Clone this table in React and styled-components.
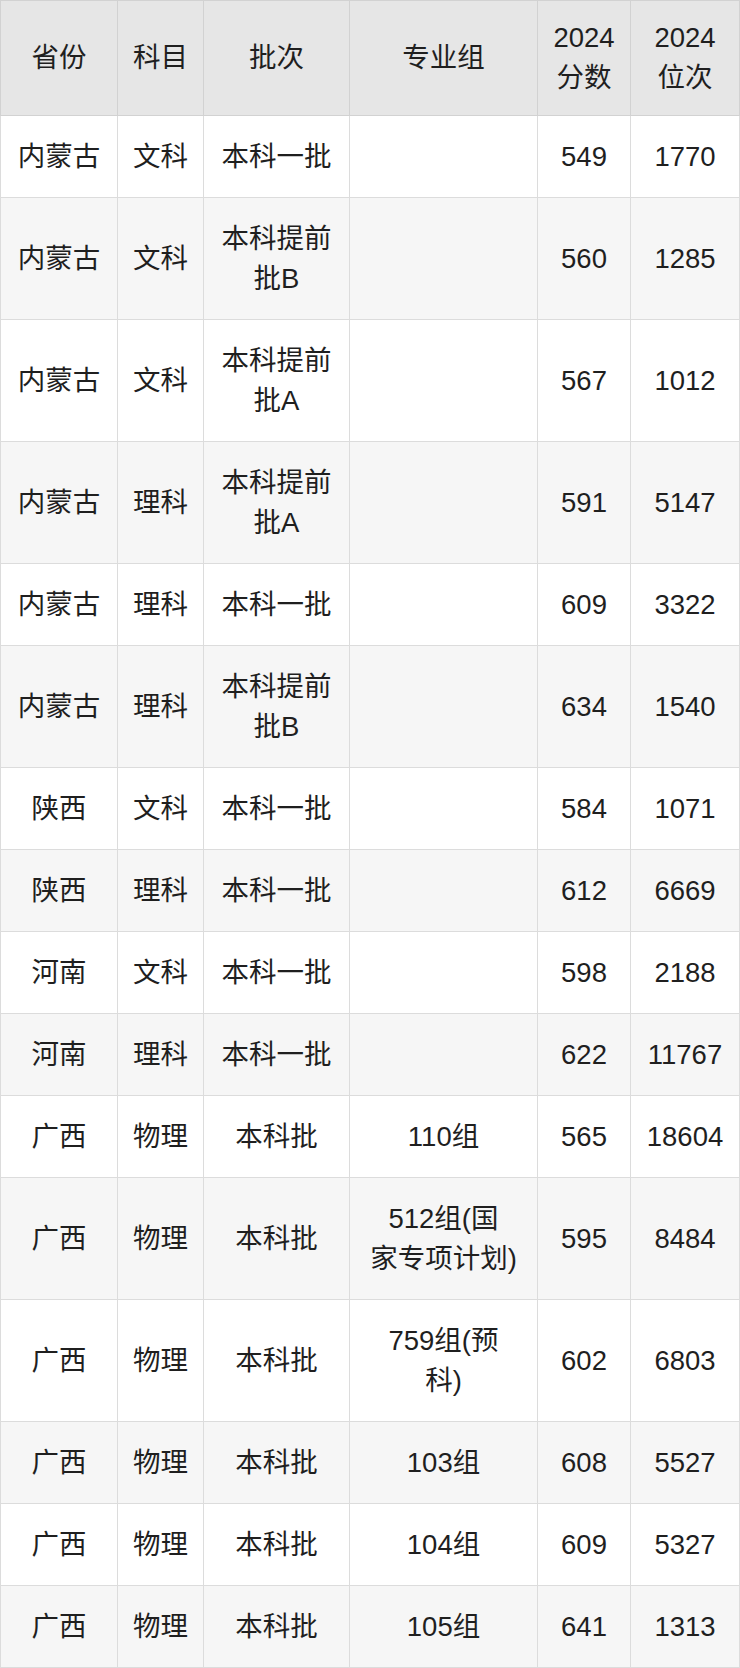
import styled, { createGlobalStyle } from 'styled-components';

const GlobalStyle = createGlobalStyle`
  html, body {
    margin: 0;
    padding: 0;
    background: #ffffff;
  }
  body {
    font-family: "Liberation Sans", "Noto Sans CJK SC", sans-serif;
    color: #1f1f1f;
  }
`;

const Table = styled.table`
  width: 739px;
  border-collapse: collapse;
  table-layout: fixed;
  font-size: 27.5px;
  line-height: 40px;
  color: #1f1f1f;
`;

const HeadCell = styled.th`
  background: #e6e6e6;
  border: 1px solid #d2d2d2;
  padding: 17px 6px;
  font-weight: 400;
  text-align: center;
  vertical-align: middle;
`;

const Row = styled.tr`
  background: ${(p) => (p.$striped ? '#f6f6f6' : '#ffffff')};
`;

const Cell = styled.td`
  border: 1px solid #dcdcdc;
  padding: 20.5px 6px;
  text-align: center;
  vertical-align: middle;
`;

const columns = [
  { key: 'prov', label: ['省份'], width: 117 },
  { key: 'subj', label: ['科目'], width: 86 },
  { key: 'batch', label: ['批次'], width: 146 },
  { key: 'group', label: ['专业组'], width: 188 },
  { key: 'score', label: ['2024', '分数'], width: 93 },
  { key: 'rank', label: ['2024', '位次'], width: 109 },
];

const rows = [
  ['内蒙古', '文科', '本科一批', '', '549', '1770'],
  ['内蒙古', '文科', ['本科提前', '批B'], '', '560', '1285'],
  ['内蒙古', '文科', ['本科提前', '批A'], '', '567', '1012'],
  ['内蒙古', '理科', ['本科提前', '批A'], '', '591', '5147'],
  ['内蒙古', '理科', '本科一批', '', '609', '3322'],
  ['内蒙古', '理科', ['本科提前', '批B'], '', '634', '1540'],
  ['陕西', '文科', '本科一批', '', '584', '1071'],
  ['陕西', '理科', '本科一批', '', '612', '6669'],
  ['河南', '文科', '本科一批', '', '598', '2188'],
  ['河南', '理科', '本科一批', '', '622', '11767'],
  ['广西', '物理', '本科批', '110组', '565', '18604'],
  ['广西', '物理', '本科批', ['512组(国', '家专项计划)'], '595', '8484'],
  ['广西', '物理', '本科批', ['759组(预', '科)'], '602', '6803'],
  ['广西', '物理', '本科批', '103组', '608', '5527'],
  ['广西', '物理', '本科批', '104组', '609', '5327'],
  ['广西', '物理', '本科批', '105组', '641', '1313'],
];

function Lines({ value }) {
  const parts = Array.isArray(value) ? value : [value];
  return parts.map((part, i) => (
    <span key={i}>
      {i > 0 && <br />}
      {part}
    </span>
  ));
}

export default function App() {
  return (
    <>
      <GlobalStyle />
      <Table>
        <colgroup>
          {columns.map((col) => (
            <col key={col.key} style={{ width: col.width }} />
          ))}
        </colgroup>
        <thead>
          <tr>
            {columns.map((col) => (
              <HeadCell key={col.key}>
                <Lines value={col.label} />
              </HeadCell>
            ))}
          </tr>
        </thead>
        <tbody>
          {rows.map((row, r) => (
            <Row key={r} $striped={r % 2 === 1}>
              {row.map((value, c) => (
                <Cell key={c}>
                  <Lines value={value} />
                </Cell>
              ))}
            </Row>
          ))}
        </tbody>
      </Table>
    </>
  );
}
